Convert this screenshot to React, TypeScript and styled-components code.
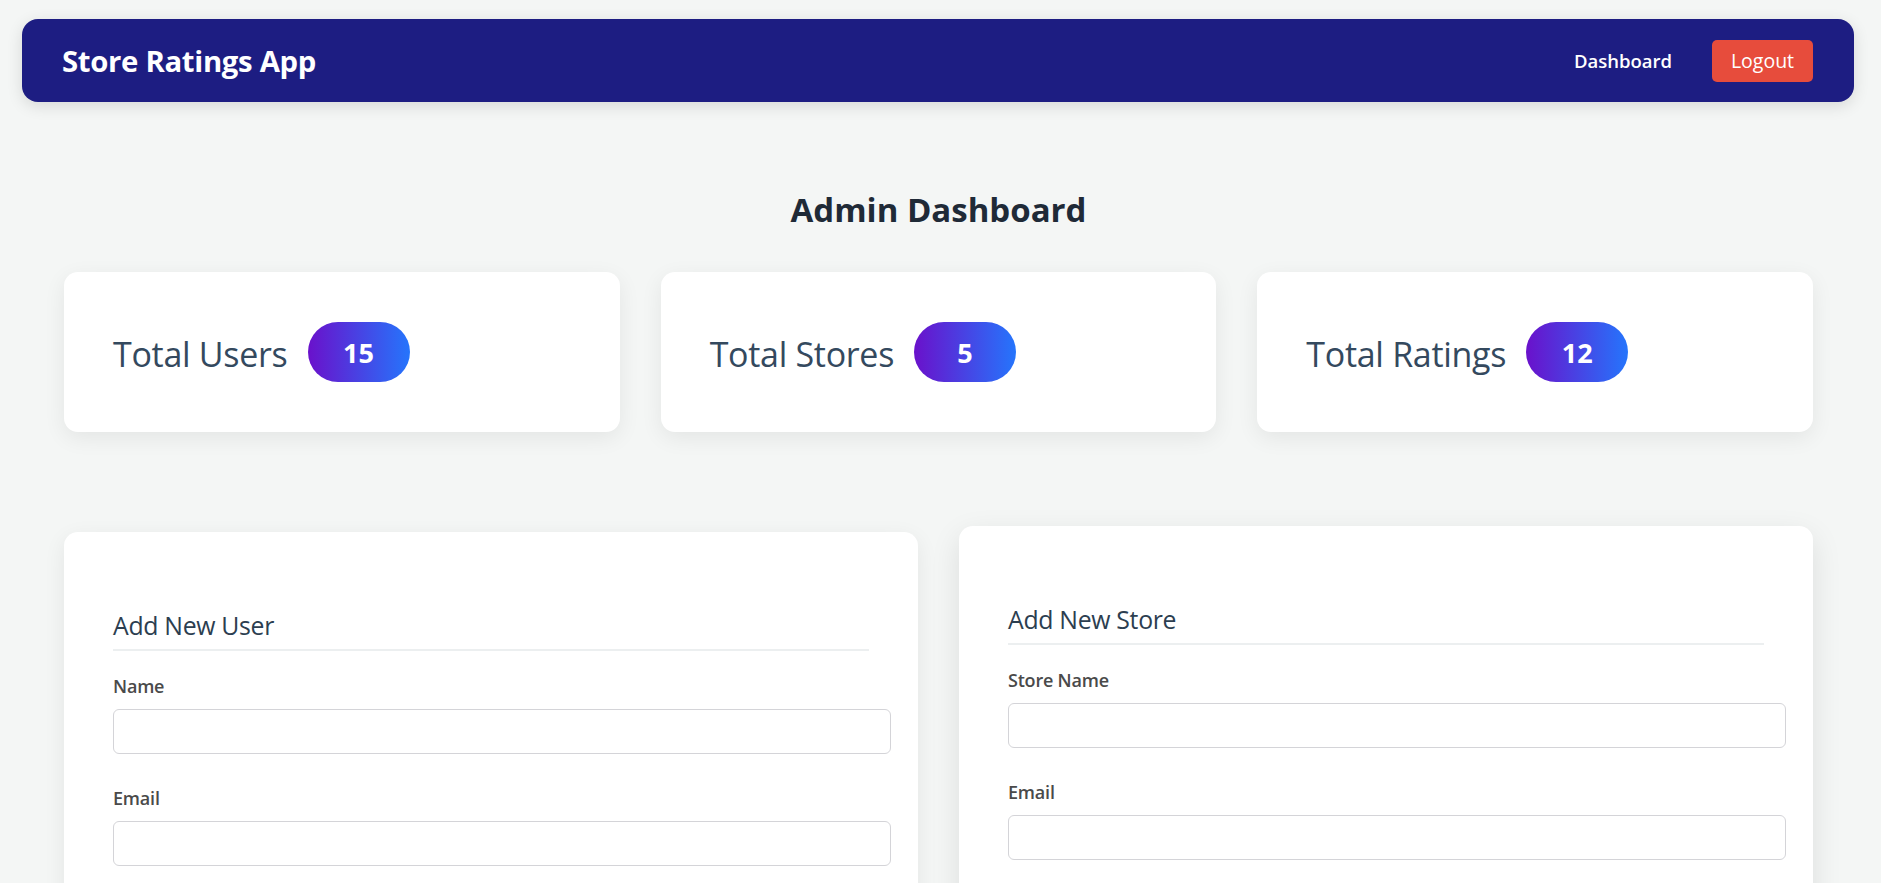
import React from "react";
import styled, { createGlobalStyle } from "styled-components";

const GlobalStyle = createGlobalStyle`
  html, body {
    margin: 0;
    padding: 0;
    background: #f4f6f5;
    font-family: "Open Sans", "Noto Sans", Arial, sans-serif;
  }
  * { box-sizing: content-box; }
`;

const Navbar = styled.nav`
  margin: 19px 27px 0 22px;
  height: 83px;
  padding: 0 41px 0 40px;
  background: #1d1d82;
  border-radius: 16px;
  box-shadow: 0 4px 16px rgba(0, 0, 0, 0.12);
  display: flex;
  align-items: center;
  justify-content: space-between;
`;

const Brand = styled.div`
  color: #ffffff;
  font-size: 29.3px;
  font-weight: 700;
  letter-spacing: -0.3px;
`;

const NavRight = styled.div`
  display: flex;
  align-items: center;
  gap: 40px;
`;

const NavLink = styled.a`
  color: #ffffff;
  font-size: 18.5px;
  font-weight: 600;
  text-decoration: none;
  cursor: pointer;
`;

const LogoutButton = styled.button`
  background: #e74c3c;
  color: #ffffff;
  border: none;
  border-radius: 5px;
  height: 42px;
  width: 101px;
  font-family: inherit;
  font-size: 19.5px;
  cursor: pointer;
  padding: 0;
`;

const Main = styled.main`
  margin: 0 68px 0 64px;
  padding: 83px 0 40px;
`;

const Title = styled.h1`
  margin: 0 0 37px;
  text-align: center;
  font-size: 33px;
  font-weight: 700;
  color: #1f2a37;
  line-height: 50px;
`;

const StatsGrid = styled.div`
  display: grid;
  grid-template-columns: repeat(3, 1fr);
  gap: 41px;
`;

const StatCard = styled.div`
  background: #ffffff;
  border-radius: 14px;
  height: 160px;
  padding: 0 49px;
  box-sizing: border-box;
  display: flex;
  align-items: center;
  gap: 20px;
  box-shadow: 0 6px 22px rgba(0, 0, 0, 0.07);
`;

const StatLabel = styled.span`
  font-size: 34px;
  color: #34495e;
  letter-spacing: -0.3px;
  padding-top: 4px;
`;

const Badge = styled.span`
  display: inline-flex;
  align-items: center;
  justify-content: center;
  width: 102px;
  height: 60px;
  border-radius: 30px;
  background: linear-gradient(90deg, #6a11cb 0%, #2575fc 100%);
  color: #ffffff;
  font-size: 27px;
  font-weight: 700;
`;

const FormsGrid = styled.div`
  display: grid;
  grid-template-columns: repeat(2, 1fr);
  gap: 41px;
  margin-top: 100px;
  align-items: start;
`;

const FormCard = styled.section<{ $raised?: boolean }>`
  background: #ffffff;
  border-radius: 14px;
  padding: 48px 49px;
  box-shadow: ${(p) =>
    p.$raised ? "0 10px 30px rgba(0, 0, 0, 0.1)" : "0 6px 22px rgba(0, 0, 0, 0.07)"};
  transform: ${(p) => (p.$raised ? "translateY(-6px)" : "none")};
`;

const FormTitle = styled.h3`
  margin: 30px 0 22px;
  padding-bottom: 9px;
  font-size: 24.8px;
  font-weight: 500;
  color: #2c3e50;
  border-bottom: 2px solid #eceff0;
  line-height: 30px;
  letter-spacing: -0.3px;
`;

const Field = styled.div`
  display: flex;
  flex-direction: column;
  margin-bottom: 31px;
`;

const Label = styled.label`
  font-size: 18px;
  font-weight: 600;
  color: #4a4a4a;
  line-height: 26px;
  margin-bottom: 10px;
  letter-spacing: -0.2px;
`;

const Input = styled.input`
  width: 100%;
  height: 23px;
  padding: 10px;
  border: 1px solid #d4d4d8;
  border-radius: 6px;
  font-family: inherit;
  font-size: 16px;
  background: #ffffff;
  outline: none;
`;

const Select = styled.select`
  width: 100%;
  height: 45px;
  border: 1px solid #d4d4d8;
  border-radius: 6px;
  font-family: inherit;
  font-size: 16px;
  background: #ffffff;
`;

const SubmitButton = styled.button`
  background: #1d1d82;
  color: #fff;
  border: none;
  border-radius: 6px;
  padding: 12px 24px;
  font-family: inherit;
  font-size: 16px;
  font-weight: 600;
`;

const stats = [
  { label: "Total Users", value: 15 },
  { label: "Total Stores", value: 5 },
  { label: "Total Ratings", value: 12 },
];

export default function App() {
  return (
    <>
      <GlobalStyle />
      <Navbar>
        <Brand>Store Ratings App</Brand>
        <NavRight>
          <NavLink>Dashboard</NavLink>
          <LogoutButton>Logout</LogoutButton>
        </NavRight>
      </Navbar>
      <Main>
        <Title>Admin Dashboard</Title>
        <StatsGrid>
          {stats.map((s) => (
            <StatCard key={s.label}>
              <StatLabel>{s.label}</StatLabel>
              <Badge>{s.value}</Badge>
            </StatCard>
          ))}
        </StatsGrid>
        <FormsGrid>
          <FormCard>
            <FormTitle>Add New User</FormTitle>
            <Field>
              <Label>Name</Label>
              <Input type="text" />
            </Field>
            <Field>
              <Label>Email</Label>
              <Input type="email" />
            </Field>
            <Field>
              <Label>Password</Label>
              <Input type="password" />
            </Field>
            <Field>
              <Label>Address</Label>
              <Input type="text" />
            </Field>
            <Field>
              <Label>Role</Label>
              <Select>
                <option>User</option>
              </Select>
            </Field>
            <SubmitButton>Add User</SubmitButton>
          </FormCard>
          <FormCard $raised>
            <FormTitle>Add New Store</FormTitle>
            <Field>
              <Label>Store Name</Label>
              <Input type="text" />
            </Field>
            <Field>
              <Label>Email</Label>
              <Input type="email" />
            </Field>
            <Field>
              <Label>Address</Label>
              <Input type="text" />
            </Field>
            <SubmitButton>Add Store</SubmitButton>
          </FormCard>
        </FormsGrid>
      </Main>
    </>
  );
}
